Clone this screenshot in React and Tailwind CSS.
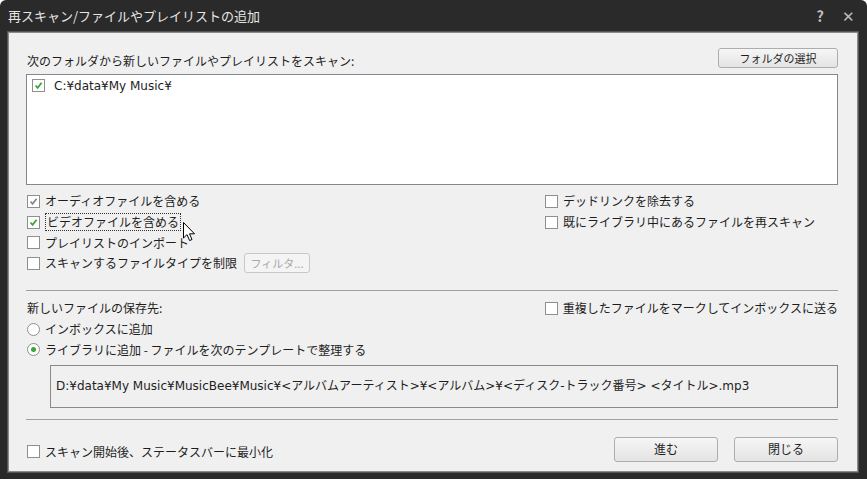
import React from "react";

const font = { fontFamily: '"Noto Sans CJK JP", "Noto Sans", sans-serif' };
// Latin glyphs in the paths are wide (Verdana-like), CJK falls through to Noto
const pathFont = { fontFamily: '"DejaVu Sans", "Noto Sans CJK JP", sans-serif' };

function Check({ checked, disabled }) {
  return (
    <span className="flex h-[13px] w-[13px] shrink-0 items-center justify-center border border-[#8f8f8f] bg-white">
      {checked && (
        <svg width="9" height="9" viewBox="0 0 9 9">
          <path
            d="M1.5 4.5 L3.6 6.8 L7.6 1.8"
            fill="none"
            stroke={disabled ? "#8a8a8a" : "#3aa53a"}
            strokeWidth="1.8"
          />
        </svg>
      )}
    </span>
  );
}

function Radio({ selected }) {
  return (
    <span className="flex h-[13px] w-[13px] shrink-0 items-center justify-center rounded-full border border-[#8f8f8f] bg-white">
      {selected && <span className="h-[5px] w-[5px] rounded-full bg-[#3aa53a]" />}
    </span>
  );
}

function CheckRow({ label, checked, disabled, focused, children }) {
  return (
    <div className="flex h-[20.7px] items-center gap-[5px] whitespace-nowrap">
      <Check checked={checked} disabled={disabled} />
      <span
        className={
          "leading-none " +
          (focused ? "border border-dotted border-[#333] px-px py-[2px]" : "")
        }
      >
        {label}
      </span>
      {children}
    </div>
  );
}

function Button({ children, className = "", disabled }) {
  return (
    <button
      className={
        "flex items-center justify-center rounded-[3px] border leading-none " +
        (disabled
          ? "border-[#c8c8c8] bg-[#f4f4f4] text-[#a8a8a8] "
          : "border-[#adadad] bg-gradient-to-b from-[#f6f6f6] to-[#e4e4e4] text-[#1e1e1e] ") +
        className
      }
    >
      {children}
    </button>
  );
}

function Cursor() {
  return (
    <svg
      className="absolute left-[174px] top-[189px]"
      width="13"
      height="20"
      viewBox="0 0 13 20"
    >
      <path
        d="M0.5 0.5 L0.5 16 L4 12.6 L6.6 18.6 L9 17.5 L6.5 11.8 L11.5 11.8 Z"
        fill="white"
        stroke="black"
        strokeWidth="1"
      />
    </svg>
  );
}

export default function App() {
  return (
    <div
      style={font}
      className="flex h-[479px] w-[867px] flex-col overflow-hidden rounded-t-[6px] bg-[#2a2a2a] text-[12px] text-[#1e1e1e]"
    >
      {/* title bar */}
      <div className="flex h-[32px] shrink-0 items-center justify-between pl-[8px] pr-[12px] text-[13px] text-[#e6e6e6]">
        <span>再スキャン/ファイルやプレイリストの追加</span>
        <div className="flex items-center gap-[18px] text-[15px] text-[#bdbdbd]">
          <span className="font-bold">?</span>
          <span>✕</span>
        </div>
      </div>

      {/* content */}
      <div className="relative mb-[7px] ml-[8px] mr-[9px] flex flex-1 flex-col border border-[#8a8a8a] bg-[#f0f0f0] pl-[17px] pr-[19px] pt-[15px] outline outline-1 outline-[#555]">
        <div className="flex h-[20px] items-center justify-between">
          <span className="pl-px pt-[5px] leading-none">
            次のフォルダから新しいファイルやプレイリストをスキャン:
          </span>
          <Button className="h-[20px] w-[120px] text-[11px]">フォルダの選択</Button>
        </div>

        <div className="mt-[6px] h-[111px] border border-[#828790] bg-white px-[5px] pt-[4px]">
          <div className="flex items-center gap-[9px]">
            <Check checked />
            <span style={pathFont} className="leading-none">
              C:¥data¥My Music¥
            </span>
          </div>
        </div>

        <div className="mt-[6px] flex pl-px">
          <div className="flex w-[518px] flex-col">
            <CheckRow label="オーディオファイルを含める" checked disabled />
            <CheckRow label="ビデオファイルを含める" checked focused />
            <CheckRow label="プレイリストのインポート" />
            <CheckRow label="スキャンするファイルタイプを制限">
              <Button disabled className="ml-[2px] h-[20px] w-[66px] text-[11px]">
                フィルタ...
              </Button>
            </CheckRow>
          </div>
          <div className="flex flex-col">
            <CheckRow label="デッドリンクを除去する" />
            <CheckRow label="既にライブラリ中にあるファイルを再スキャン" />
          </div>
        </div>

        <div className="mt-[16px] border-t border-[#a0a0a0]" />

        <div className="mt-[7px] flex pl-px">
          <div className="flex w-[518px] flex-col">
            <div className="flex h-[21px] items-center leading-none">
              新しいファイルの保存先:
            </div>
            <div className="flex h-[21px] items-center gap-[5px]">
              <Radio />
              <span className="leading-none">インボックスに追加</span>
            </div>
            <div className="flex h-[20px] items-center gap-[5px]">
              <Radio selected />
              <span className="leading-none">
                ライブラリに追加 - ファイルを次のテンプレートで整理する
              </span>
            </div>
          </div>
          <div className="flex flex-col">
            <CheckRow label="重複したファイルをマークしてインボックスに送る" />
          </div>
        </div>

        <div
          style={pathFont}
          className="ml-[24px] mt-[5px] flex h-[43px] items-center whitespace-nowrap border border-[#8a8a8a] bg-[#f0f0f0] px-[5px] leading-none"
        >
          D:¥data¥My Music¥MusicBee¥Music¥&lt;アルバムアーティスト&gt;¥&lt;アルバム&gt;¥&lt;ディスク-トラック番号&gt; &lt;タイトル&gt;.mp3
        </div>

        <div className="mt-[11px] border-t border-[#a0a0a0]" />

        <div className="mt-[17px] flex items-center justify-between">
          <div className="mt-[5px] flex items-center gap-[5px] pl-px">
            <Check />
            <span className="leading-none">スキャン開始後、ステータスバーに最小化</span>
          </div>
          <div className="flex gap-[16px]">
            <Button className="h-[25px] w-[104px] text-[12px]">進む</Button>
            <Button className="h-[25px] w-[104px] text-[12px]">閉じる</Button>
          </div>
        </div>

        <Cursor />
      </div>
    </div>
  );
}
